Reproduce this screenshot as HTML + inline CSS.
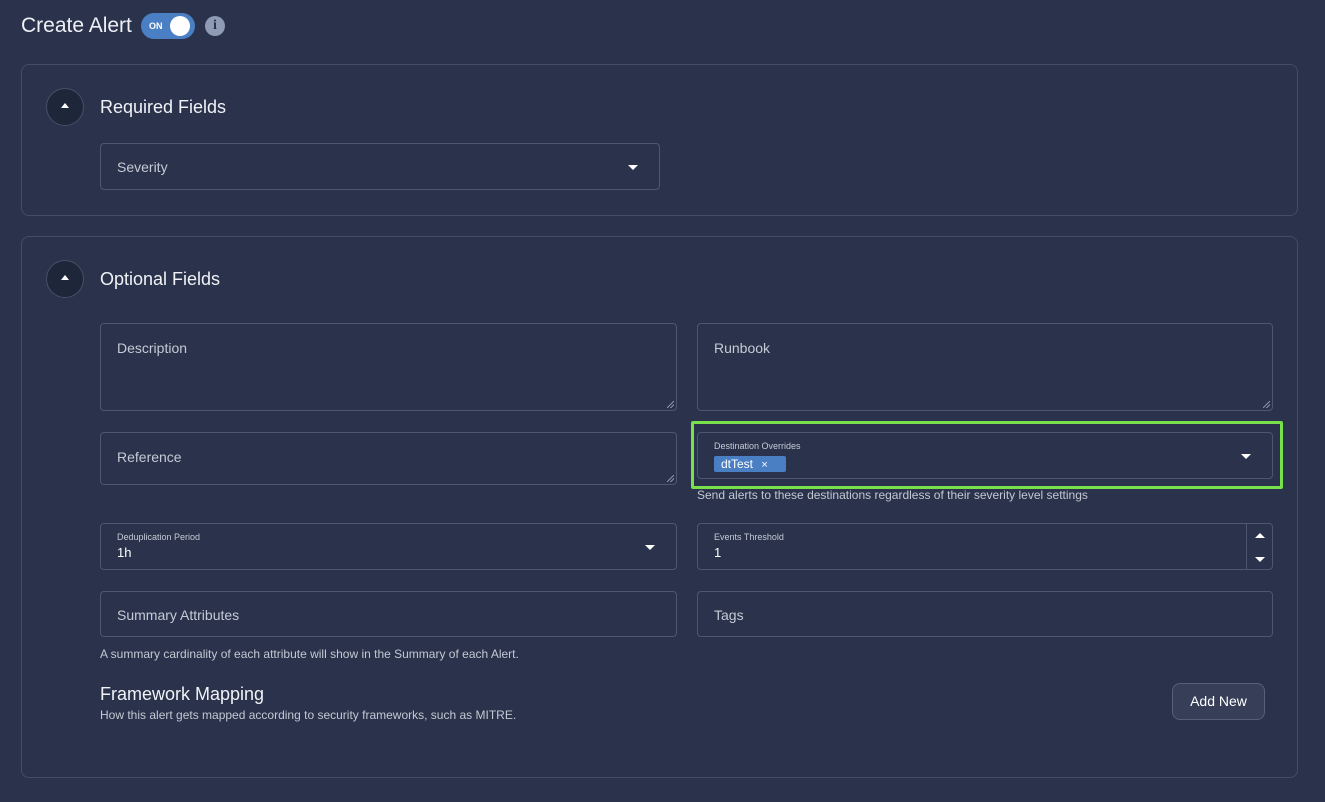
<!DOCTYPE html>
<html><head><meta charset="utf-8"><style>
*{box-sizing:border-box;margin:0;padding:0}
body{width:1325px;height:802px;background:#2a334b;font-family:"Liberation Sans",sans-serif;color:#e6e9f0;position:relative;overflow:hidden}
.a{position:absolute}
.panel{position:absolute;border:1px solid #434d66;border-radius:8px}
.box{position:absolute;border:1px solid #4d5770;border-radius:4px}
.ph{position:absolute;left:16px;font-size:14px;color:#c5cad6}
.lbl{position:absolute;left:16px;top:8px;font-size:9px;color:#c5cad6}
.val{position:absolute;left:16px;top:21px;font-size:13px;color:#fff}
.circ{position:absolute;width:38px;height:38px;border-radius:50%;background:#1e263a;border:1px solid #454f68}
.circ:after{content:"";position:absolute;left:14px;top:14px;border-left:4px solid transparent;border-right:4px solid transparent;border-bottom:5px solid #fff}
.tri{position:absolute;width:0;height:0;border-left:5px solid transparent;border-right:5px solid transparent;border-top:5px solid #fff}
.h{position:absolute;font-size:18px;color:#f0f2f6}
.small{position:absolute;font-size:12px;color:#c3c8d3}
.rs{position:absolute;right:2px;bottom:2px;width:7px;height:7px;background:linear-gradient(135deg,transparent 45%,#8a92a6 45%,#8a92a6 55%,transparent 55%,transparent 70%,#8a92a6 70%,#8a92a6 80%,transparent 80%)}
</style></head><body>
<div class="a" style="left:21px;top:14px;font-size:21px;color:#eef0f5">Create Alert</div>
<div class="a" style="left:141px;top:13px;width:54px;height:26px;border-radius:13px;background:#4a7fc4">
 <span class="a" style="left:8px;top:8px;font-size:9px;font-weight:bold;color:#fff">ON</span>
 <span class="a" style="left:29px;top:3px;width:20px;height:20px;border-radius:50%;background:#fff"></span>
</div>
<div class="a" style="left:205px;top:16px;width:20px;height:20px;border-radius:50%;background:#8f9ab5;color:#2a334b;font-weight:bold;font-size:14px;text-align:center;line-height:20px;font-family:'Liberation Serif',serif">i</div>

<div class="panel" style="left:21px;top:64px;width:1277px;height:152px"></div>
<div class="circ" style="left:46px;top:88px"></div>
<div class="h" style="left:100px;top:97px">Required Fields</div>
<div class="box" style="left:100px;top:143px;width:560px;height:47px"><span class="ph" style="top:15px">Severity</span><span class="tri" style="left:527px;top:21px"></span></div>

<div class="panel" style="left:21px;top:236px;width:1277px;height:542px"></div>
<div class="circ" style="left:46px;top:260px"></div>
<div class="h" style="left:100px;top:269px">Optional Fields</div>

<div class="box" style="left:100px;top:323px;width:577px;height:88px"><span class="ph" style="top:16px">Description</span><span class="rs"></span></div>
<div class="box" style="left:697px;top:323px;width:576px;height:88px"><span class="ph" style="top:16px">Runbook</span><span class="rs"></span></div>
<div class="box" style="left:100px;top:432px;width:577px;height:53px"><span class="ph" style="top:16px">Reference</span><span class="rs"></span></div>

<div class="a" style="left:691px;top:421px;width:592px;height:68px;border:3px solid #78e04a;border-radius:2px"></div>
<div class="box" style="left:697px;top:432px;width:576px;height:47px">
 <span class="lbl">Destination Overrides</span>
 <span class="a" style="left:16px;top:23px;width:72px;height:16px;background:#4a7fc4;border-radius:2px;font-size:12px;color:#fff;padding-left:7px;line-height:16px">dtTest <span style="margin-left:5px;font-size:11px">×</span></span>
 <span class="tri" style="left:543px;top:21px"></span>
</div>
<div class="small" style="left:697px;top:488px">Send alerts to these destinations regardless of their severity level settings</div>

<div class="box" style="left:100px;top:523px;width:577px;height:47px"><span class="lbl">Deduplication Period</span><span class="val">1h</span><span class="tri" style="left:544px;top:21px"></span></div>
<div class="box" style="left:697px;top:523px;width:576px;height:47px"><span class="lbl">Events Threshold</span><span class="val">1</span>
 <span class="a" style="left:548px;top:0;width:1px;height:45px;background:#4d5770"></span>
 <span class="a" style="left:557px;top:9px;border-left:5px solid transparent;border-right:5px solid transparent;border-bottom:5px solid #fff"></span>
 <span class="tri" style="left:557px;top:33px"></span>
</div>

<div class="box" style="left:100px;top:591px;width:577px;height:46px"><span class="ph" style="top:15px">Summary Attributes</span></div>
<div class="box" style="left:697px;top:591px;width:576px;height:46px"><span class="ph" style="top:15px">Tags</span></div>
<div class="small" style="left:100px;top:647px">A summary cardinality of each attribute will show in the Summary of each Alert.</div>

<div class="h" style="left:100px;top:684px">Framework Mapping</div>
<div class="small" style="left:100px;top:708px">How this alert gets mapped according to security frameworks, such as MITRE.</div>
<div class="a" style="left:1172px;top:683px;width:93px;height:37px;border:1px solid #56607a;border-radius:8px;background:#373f58;font-size:14px;color:#fff;text-align:center;line-height:35px">Add New</div>
</body></html>
